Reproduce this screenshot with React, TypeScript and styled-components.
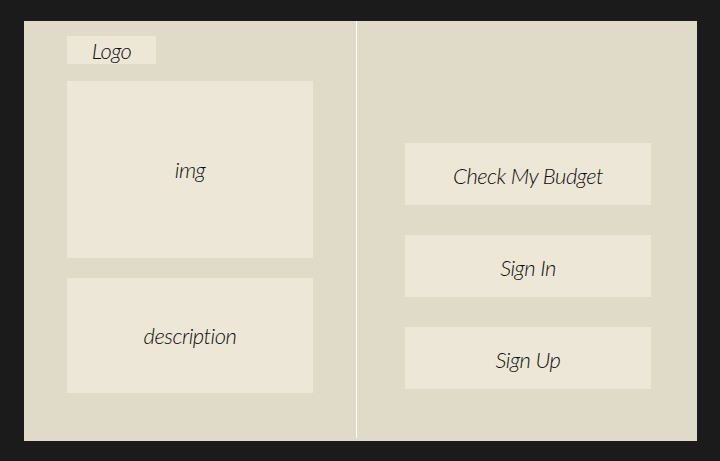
import React from "react";
import styled, { createGlobalStyle } from "styled-components";

const Global = createGlobalStyle`
  html, body { margin: 0; padding: 0; background: #1b1b1b; }
  * { box-sizing: border-box; }
`;

const Page = styled.div`
  width: 720px;
  height: 461px;
  padding: 21px 0 0 24px;
  background: #1b1b1b;
`;

const Panel = styled.div`
  width: 673px;
  height: 420px;
  background: #e0dbc8;
  display: grid;
  grid-template-columns: 333px 340px;
  align-items: start;
`;

const LeftCol = styled.div`
  height: 417px;
  border-right: 1px solid #ffffff;
  padding: 15px 0 0 43px;
  display: flex;
  flex-direction: column;
`;

const RightCol = styled.div`
  padding-top: 122px;
  display: flex;
  flex-direction: column;
  align-items: center;
  gap: 30px;
  padding-left: 2px;
`;

const Box = styled.div<{ $w: number; $h: number; $mt?: number }>`
  width: ${(p) => p.$w}px;
  height: ${(p) => p.$h}px;
  margin-top: ${(p) => p.$mt ?? 0}px;
  background: #ece7d7;
  display: flex;
  align-items: center;
  justify-content: center;
  font-family: "Lato", "Open Sans", sans-serif;
  font-style: italic;
  font-weight: 300;
  font-size: 22px;
  letter-spacing: -0.5px;
  color: #0e0e0e;
`;

const Button = styled.div`
  width: 246px;
  height: 62px;
  background: #ece7d7;
  display: flex;
  align-items: center;
  justify-content: center;
  padding-top: 2px;
  font-family: "Lato", "Open Sans", sans-serif;
  font-style: italic;
  font-weight: 300;
  font-size: 22px;
  letter-spacing: -0.5px;
  color: #0e0e0e;
  cursor: pointer;
`;

export default function App() {
  return (
    <>
      <Global />
      <Page>
        <Panel>
          <LeftCol>
            <Box $w={89} $h={28}>Logo</Box>
            <Box $w={246} $h={177} $mt={17}>img</Box>
            <Box $w={246} $h={115} $mt={20}>description</Box>
          </LeftCol>
          <RightCol>
            <Button>Check My Budget</Button>
            <Button>Sign In</Button>
            <Button>Sign Up</Button>
          </RightCol>
        </Panel>
      </Page>
    </>
  );
}
